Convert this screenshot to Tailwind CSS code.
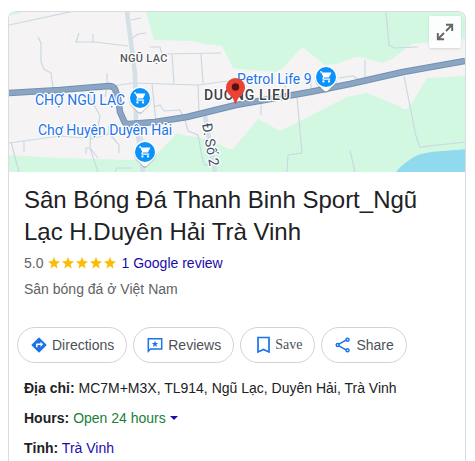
<!DOCTYPE html>
<html lang="vi">
<head>
    <meta charset="UTF-8">
    <meta name="viewport" content="width=device-width, initial-scale=1.0">
    <title>Sân Bóng Đá Thanh Binh Sport</title>
    <script src="https://cdn.jsdelivr.net/npm/@tailwindcss/browser@4"></script>
</head>
<body class="bg-white font-['Liberation_Sans',Arial,sans-serif] text-sm text-[#202124]">
    <div class="flex min-h-screen flex-col pt-[11px] pr-[9px] pl-2">
        <main class="flex-1 rounded-t-lg border border-b-0 border-[#dadce0]">
            <!-- Map -->
            <div class="relative overflow-hidden rounded-t-lg">
                <svg class="block h-40 w-full bg-[#f5f3f4]" viewBox="9 12 456 160" preserveAspectRatio="xMidYMid slice" role="img" aria-label="Map">
                    <defs>
                        <g id="shop">
                            <path d="M0 15C-2 15-4 11-8 8A11.300 11.300 0 1 1 8 8C4 11 2 15 0 15Z" fill="#5f6368" opacity=".35" transform="translate(0 1)"/>
                            <path d="M0 14.500C-2 14.500-4 11-8 8A11.300 11.300 0 1 1 8 8C4 11 2 14.500 0 14.500Z" fill="#fff"/>
                            <circle r="10" fill="#0b93fb"/>
                            <path transform="translate(-6.500 -6.800) scale(.56)" fill="#fff" d="M7 18c-1.100 0-1.990.9-1.990 2S5.900 22 7 22s2-.9 2-2-.9-2-2-2zM1 2v2h2l3.600 7.590-1.350 2.450c-.16.28-.25.61-.25.96 0 1.100.9 2 2 2h12v-2H7.420c-.14 0-.25-.11-.25-.25l.03-.12.9-1.630h7.450c.75 0 1.410-.41 1.750-1.030l3.580-6.490A1 1 0 0 0 20 4H5.210l-.94-2H1zm16 16c-1.100 0-1.990.9-1.990 2s.89 2 1.990 2 2-.9 2-2-.9-2-2-2z"/>
                        </g>
                    </defs>
                    <!-- Land and water -->
                    <g fill="#d3f8e2">
                        <path d="M9 12H25L9 16Z"/>
                        <path d="M146 12 154 40 193 41 205 44 222 46 233 68 250 70 276 72 283 68 300 49Q303 47 305 49L325 65 337 64 355 57 360 57 382 63 392 59 412 44 465 39V12Z"/>
                        <path d="M9 155 60 158 133 160 158 153 177 133 187 136 198 137 217 143 228 149H233L258 119 280 131 296 123 347 97 367 93 401 107 403 109H408L427 78 465 76V172H9Z"/>
                    </g>
                    <path d="M396 172Q405 161 418 155C428 151 450 151 465 149V172Z" fill="#90daee"/>
                    <!-- Small roads -->
                    <g fill="none" stroke="#cbd8e2" stroke-width="1.200">
                        <path d="M9 25 79 10M38 37 41 43 41 62 44 69 51 73 53 88M79 33 76 42 95 42 128 46M93 34V43M131 39 138 34 146 33M131 20 141 18"/>
                        <path d="M107 73V88L105 97M9 143 60 136 84 138M11 142 19 172M24 141V152M88 89 92 101 100 116 98 127 91 130 90 148 98 172M90 148H86V154M90 148 98 158M91 139 109 134V125M108 132 119 145V153M140 120 143 147M115 172 117 168H132"/>
                        <path d="M112 86 134 83 198 85 228 81M152 84 156 122M154 107 160 105 164 111 180 110 185 120 188 131 198 135 203 162 205 165 211 164M198 85 199 112M172 54 174 84M201 54 203 83M150 47 160 47 162 54 221 53M261 103V115M285 79V91"/>
                        <path d="M297 97 302 153 288 155 287 172M365 60V79M339 78 353 76 359 80M311 80V89M404 76 416 136 420 147 465 142M350 150 355 172M386 12 389 45 394 48 418 47"/>
                    </g>
                    <!-- Wide side roads -->
                    <g fill="none" stroke="#d4dfe6" stroke-width="4.500">
                        <path d="M127 12 135 74 136 120 143 172"/>
                        <path d="M205 116 215 172"/>
                    </g>
                    <!-- Main road -->
                    <g fill="none" stroke-linejoin="round">
                        <path d="M9 93 60 90 109 86Q113 86 115 89L118 98 120 112 124 121Q125 124 129 124L155 122 187 117 236 105 310 92 350 84 403 72 465 61" stroke="#7191b4" stroke-width="6.500"/>
                        <path d="M9 93 60 90 109 86Q113 86 115 89L118 98 120 112 124 121Q125 124 129 124L155 122 187 117 236 105 310 92 350 84 403 72 465 61" stroke="#8ba5c2" stroke-width="4.500"/>
                    </g>
                    <!-- Labels -->
                    <g class="font-[Roboto,sans-serif]" stroke="#fff" stroke-width="2.500" stroke-linejoin="round" paint-order="stroke">
                        <g class="text-sm" fill="#2374e8">
                            <text x="35" y="105">CHỢ NGŨ LẠC</text>
                            <text x="38" y="135">Chợ Huyện Duyên Hải</text>
                            <text x="237" y="84">Petrol Life 9</text>
                        </g>
                        <text class="text-[11px] font-medium tracking-wide" x="120" y="62" fill="#54575b">NGŨ LẠC</text>
                        <text class="text-sm font-medium tracking-wider" x="204" y="100" fill="#3c4043">DUONG LIEU</text>
                        <text class="text-sm" transform="translate(202 124) rotate(80)" fill="#3c4b5f">Đ. Số 2</text>
                    </g>
                    <!-- Markers -->
                    <use href="#shop" x="140" y="98"/>
                    <use href="#shop" x="145" y="152"/>
                    <use href="#shop" x="326" y="77"/>
                    <path d="M235.500 104C234.500 104 234.500 101 232.500 98C230 95 226 92.500 226 87.500A9.500 9.500 0 0 1 245 87.500C245 92.500 241 95 238.500 98C236.500 101 236.500 104 235.500 104Z" fill="#ea4335"/>
                    <circle cx="235.500" cy="87" r="3.700" fill="#5a1210"/>
                </svg>
                <button type="button" aria-label="Expand map" class="absolute top-1 right-1 flex size-8 items-center justify-center rounded-xs bg-white/90 shadow-sm">
                    <svg class="size-5" viewBox="0 0 20 20" fill="none" stroke="#666" stroke-width="1.900">
                        <path d="M11 2.800h6.200V9M17 3l-6 6M9 17.200H2.800V11M3 17l6-6"/>
                    </svg>
                </button>
            </div>

            <!-- Title and rating -->
            <header class="px-[15px] pt-3">
                <h1 class="text-2xl">Sân Bóng Đá Thanh Binh Sport_Ngũ Lạc H.Duyên Hải Trà Vinh</h1>
                <div class="mt-[2px] flex items-center gap-1 leading-[26px] text-[#5f6368]">
                    <span>5.0</span>
                    <svg class="h-3 w-[70px]" viewBox="0 0 70 12" fill="#fbbc04" role="img" aria-label="5 stars">
                        <defs>
                            <path id="star" d="M6 0 7.600 4.100 12 4.400 8.600 7.200 9.700 11.500 6 9.100 2.300 11.500 3.400 7.200 0 4.400 4.400 4.100Z"/>
                        </defs>
                        <use href="#star" x="1"/>
                        <use href="#star" x="15"/>
                        <use href="#star" x="29"/>
                        <use href="#star" x="43"/>
                        <use href="#star" x="57"/>
                    </svg>
                    <a href="#" class="text-[#1a0dab]">1 Google review</a>
                </div>
                <p class="leading-[26px] text-[#5f6368]">Sân bóng đá ở Việt Nam</p>
            </header>

            <!-- Actions -->
            <div class="mt-[25px] flex flex-wrap gap-[6px] px-2 text-[#4d5156]">
                <button type="button" class="flex h-9 items-center gap-1 rounded-full border border-[#d2d2d2] px-3">
                    <svg class="size-[18px]" viewBox="0 0 24 24" fill="#1a73e8">
                        <path d="M21.710 11.290l-9-9a1 1 0 0 0-1.410 0l-9 9a1 1 0 0 0 0 1.410l9 9c.39.39 1.020.39 1.410 0l9-9a1 1 0 0 0 0-1.410zM14 14.500V12h-4v3H8v-4c0-.55.45-1 1-1h5V7.500l3.500 3.500-3.500 3.500z"/>
                    </svg>
                    Directions
                </button>
                <button type="button" class="flex h-9 items-center gap-1 rounded-full border border-[#d2d2d2] px-3">
                    <svg class="size-[18px]" viewBox="0 0 18 18">
                        <path d="M2.300 15.200V2.800H15.700V13H4.500Z" fill="none" stroke="#1a73e8" stroke-width="1.500"/>
                        <path d="M9 4.700 9.900 6.900 12.200 7.100 10.400 8.600 11 10.900 9 9.600 7 10.900 7.600 8.600 5.800 7.100 8.100 6.900Z" fill="#1a73e8"/>
                    </svg>
                    Reviews
                </button>
                <button type="button" class="flex h-9 items-center gap-1 rounded-full border border-[#d2d2d2] px-3 font-['Liberation_Serif',serif]">
                    <svg class="size-[18px]" viewBox="0 0 18 18" fill="none" stroke="#1a73e8" stroke-width="1.700">
                        <path d="M5 1.500H16V16L10.500 13.500 5 16Z"/>
                    </svg>
                    Save
                </button>
                <button type="button" class="flex h-9 items-center gap-1 rounded-full border border-[#d2d2d2] px-3">
                    <svg class="size-[18px]" viewBox="0 0 18 18" fill="none" stroke="#1a73e8" stroke-width="1.500">
                        <path d="M5 8.200 12 4.200M5 9.800 12 13.800"/>
                        <circle cx="3.700" cy="9" r="1.500"/>
                        <circle cx="13.500" cy="3.700" r="1.500"/>
                        <circle cx="13.500" cy="14.300" r="1.500"/>
                    </svg>
                    Share
                </button>
            </div>

            <!-- Details -->
            <div class="mt-[15px] space-y-[10px] px-[15px]">
                <p><b>Địa chỉ:</b> MC7M+M3X, TL914, Ngũ Lạc, Duyên Hải, Trà Vinh</p>
                <p class="flex items-center gap-1">
                    <b>Hours:</b>
                    <button type="button" class="flex items-center gap-1 text-[#188038]">
                        Open 24 hours
                        <svg class="h-1 w-2" viewBox="0 0 8 4"><path d="M0 0H8L4 4Z" fill="#1a0dab"/></svg>
                    </button>
                </p>
                <p><b>Tỉnh:</b> <a href="#" class="text-[#1a0dab]">Trà Vinh</a></p>
            </div>
        </main>
    </div>
</body>
</html>
